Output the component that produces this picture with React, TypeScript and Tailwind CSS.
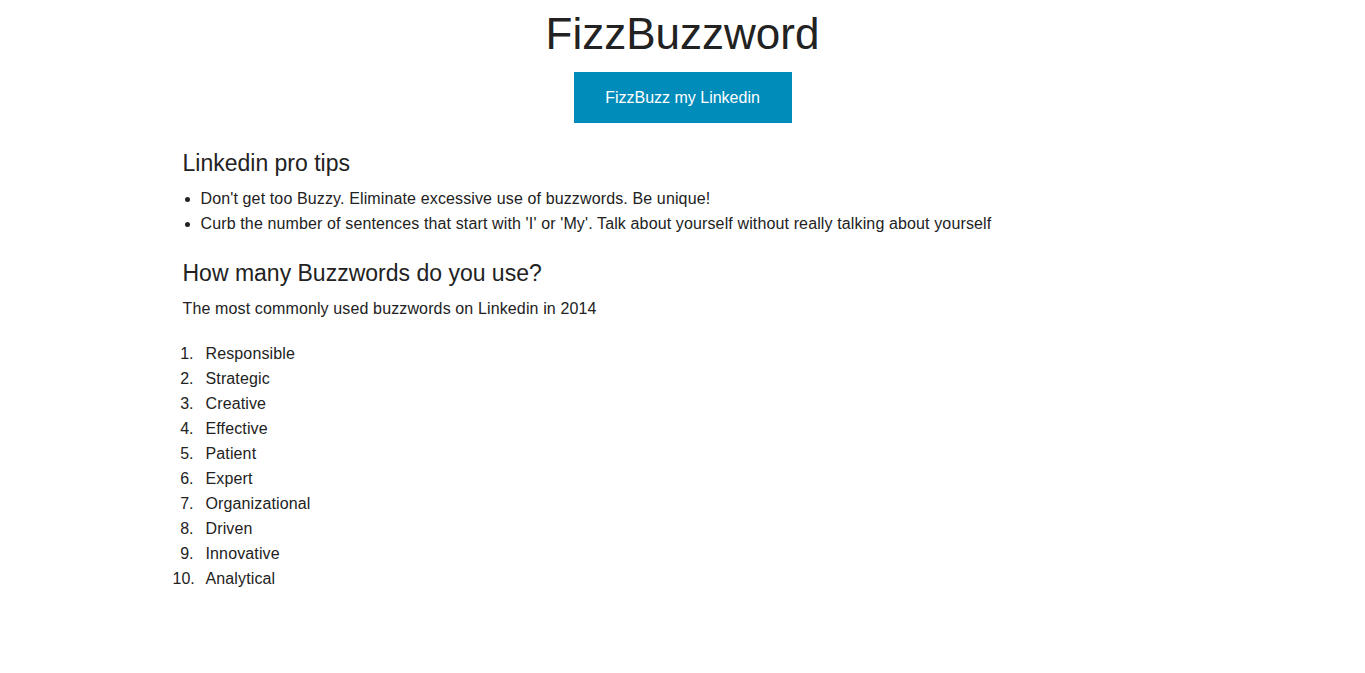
export default function App() {
  const words = [
    "Responsible",
    "Strategic",
    "Creative",
    "Effective",
    "Patient",
    "Expert",
    "Organizational",
    "Driven",
    "Innovative",
    "Analytical",
  ];
  return (
    <div
      className="min-h-screen bg-white text-[#222222]"
      style={{ fontFamily: '"Liberation Sans", Arial, Helvetica, sans-serif' }}
    >
      <div className="pt-[4px] flex flex-col items-center">
        <h1 className="text-[44px] leading-[60px] font-normal">FizzBuzzword</h1>
        <button className="mt-[8px] w-[218px] h-[51px] bg-[#008cba] text-white text-[16px] leading-[20px]">
          FizzBuzz my Linkedin
        </button>
      </div>
      <div className="max-w-[1000px] mx-auto">
        <h4 className="mt-[25px] text-[23px] leading-[30px] font-normal">Linkedin pro tips</h4>
        <ul className="mt-[8px] list-disc pl-[18px] text-[16px] leading-[25px] tracking-[0.13px]">
          <li>Don't get too Buzzy. Eliminate excessive use of buzzwords. Be unique!</li>
          <li>
            Curb the number of sentences that start with 'I' or 'My'. Talk about yourself without really talking
            about yourself
          </li>
        </ul>
        <h4 className="mt-[22px] text-[23px] leading-[30px] font-normal">How many Buzzwords do you use?</h4>
        <p className="mt-[8px] text-[16px] leading-[25px] tracking-[0.13px]">
          The most commonly used buzzwords on Linkedin in 2014
        </p>
        <ol className="mt-[20px] -ml-[10px] text-[16px] leading-[25px] tracking-[0.13px]">
          {words.map((w, i) => (
            <li key={w} className="flex">
              <span className="w-[21px] shrink-0 text-right tracking-normal">{i + 1}.</span>
              <span className="ml-[12px]">{w}</span>
            </li>
          ))}
        </ol>
      </div>
    </div>
  );
}
